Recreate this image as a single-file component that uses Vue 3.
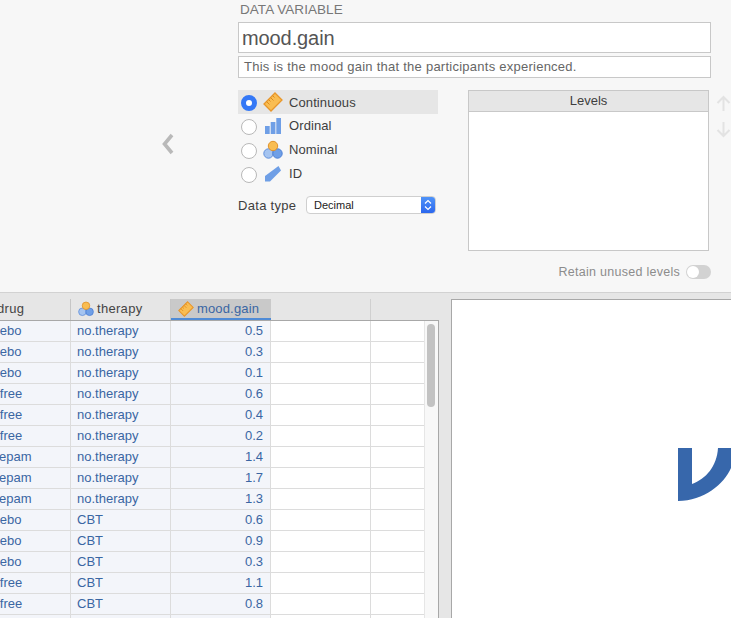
<script setup>
const drugs = ['placebo','placebo','placebo','anxifree','anxifree','anxifree','joyzepam','joyzepam','joyzepam','placebo','placebo','placebo','anxifree','anxifree','anxifree']
const gains = ['0.5','0.3','0.1','0.6','0.4','0.2','1.4','1.7','1.3','0.6','0.9','0.3','1.1','0.8','1.2']
const rows = drugs.map((drug, i) => ({ drug, therapy: i < 9 ? 'no.therapy' : 'CBT', gain: gains[i] }))
const measures = [
  { key: 'ruler', label: 'Continuous', on: true },
  { key: 'bars', label: 'Ordinal' },
  { key: 'circles', label: 'Nominal' },
  { key: 'tag', label: 'ID' }
]
</script>

<template>
  <div class="page">
    <section class="editor">
      <div class="back">
        <svg width="14" height="22" viewBox="0 0 14 22"><path d="M12 2 4.500 11l7.500 9" fill="none" stroke="#b9b9b9" stroke-width="3.600"/></svg>
      </div>
      <div class="form">
        <div class="title">DATA VARIABLE</div>
        <div class="name">mood.gain</div>
        <div class="desc">This is the mood gain that the participants experienced.</div>
        <div class="lower">
          <div class="measures">
            <div v-for="m in measures" :key="m.key" class="measure" :class="{ on: m.on }">
              <span class="radio"></span>
              <svg v-if="m.key === 'ruler'" class="micon" width="20" height="20" viewBox="0 0 20 20">
                <path d="M12 1 19 8 8 19 1 12Z" fill="#f9bd52" stroke="#e8962a" stroke-width="1.300"/>
                <path d="M3.500 9.500 6.500 12.500M5.500 7.500 7.500 9.500M7.500 5.500 10.500 8.500M9.500 3.500 11.500 5.500" stroke="#dd8a1e" stroke-width="1" fill="none"/>
              </svg>
              <svg v-else-if="m.key === 'bars'" class="micon" width="20" height="20" viewBox="0 0 20 20">
                <rect x="2" y="10" width="4.700" height="8" fill="#6f9fe6"/>
                <rect x="7.700" y="6" width="4.700" height="12" fill="#6f9fe6"/>
                <rect x="13.300" y="2" width="4.700" height="16" fill="#6f9fe6"/>
              </svg>
              <svg v-else-if="m.key === 'circles'" class="micon" width="20" height="20" viewBox="0 0 20 20">
                <circle cx="5.500" cy="13.500" r="4.700" fill="#a5c4f0" stroke="#5f8fdc" stroke-width="1"/>
                <circle cx="14.500" cy="13.500" r="4.700" fill="#6f9fe6" stroke="#4a7fd6" stroke-width="1"/>
                <circle cx="10" cy="6" r="4.700" fill="#f9bd52" stroke="#e0922a" stroke-width="1"/>
              </svg>
              <svg v-else class="micon" width="20" height="20" viewBox="0 0 20 20">
                <path d="M15.500 2 18 6.500 7 17.500H2V12Z" fill="#6f9fe6"/>
              </svg>
              <span class="mlabel">{{ m.label }}</span>
            </div>
            <div class="dtype">
              <span>Data type</span>
              <div class="select">
                <span class="sval">Decimal</span>
                <span class="stepper">
                  <svg width="8" height="12" viewBox="0 0 8 12"><path d="M1 4.500 4 1.500l3 3M1 7.500l3 3 3-3" fill="none" stroke="#fff" stroke-width="1.200"/></svg>
                </span>
              </div>
            </div>
          </div>
          <div class="levels-col">
            <div class="levels-row">
              <div class="levels">
                <div class="lhead">Levels</div>
              </div>
              <div class="arrows">
                <svg width="15" height="16" viewBox="0 0 15 16"><path d="M7.500 16V2M1.500 8l6-6 6 6" fill="none" stroke="#e3e3e3" stroke-width="2"/></svg>
                <svg width="15" height="16" viewBox="0 0 15 16"><path d="M7.500 0v14M1.500 8l6 6 6-6" fill="none" stroke="#e3e3e3" stroke-width="2"/></svg>
              </div>
            </div>
            <div class="retain">
              <span>Retain unused levels</span>
              <span class="toggle"><span class="knob"></span></span>
            </div>
          </div>
        </div>
      </div>
    </section>

    <section class="bottom">
      <div class="sheet">
        <div class="thead">
          <div class="th c1">
            <svg class="hicon" width="16" height="16" viewBox="0 0 20 20"><circle cx="5.500" cy="13.500" r="4.700" fill="#a5c4f0" stroke="#5f8fdc"/><circle cx="14.500" cy="13.500" r="4.700" fill="#6f9fe6" stroke="#4a7fd6"/><circle cx="10" cy="6" r="4.700" fill="#f9bd52" stroke="#e0922a"/></svg>
            <span>drug</span>
          </div>
          <div class="th c2">
            <svg class="hicon" width="16" height="16" viewBox="0 0 20 20"><circle cx="5.500" cy="13.500" r="4.700" fill="#a5c4f0" stroke="#5f8fdc"/><circle cx="14.500" cy="13.500" r="4.700" fill="#6f9fe6" stroke="#4a7fd6"/><circle cx="10" cy="6" r="4.700" fill="#f9bd52" stroke="#e0922a"/></svg>
            <span>therapy</span>
          </div>
          <div class="th c3 sel">
            <svg class="hicon" width="16" height="16" viewBox="0 0 20 20"><path d="M12 1 19 8 8 19 1 12Z" fill="#f9bd52" stroke="#e8962a" stroke-width="1.300"/><path d="M3.500 9.500 6.500 12.500M5.500 7.500 7.500 9.500M7.500 5.500 10.500 8.500M9.500 3.500 11.500 5.500" stroke="#dd8a1e" fill="none"/></svg>
            <span>mood.gain</span>
          </div>
          <div class="th c4"></div>
        </div>
        <div class="tbody">
          <div class="rows">
            <div v-for="(r, i) in rows" :key="i" class="tr">
              <div class="td c1 filled">{{ r.drug }}</div>
              <div class="td c2 filled">{{ r.therapy }}</div>
              <div class="td c3 filled num">{{ r.gain }}</div>
              <div class="td c4"></div>
              <div class="td c5"></div>
            </div>
          </div>
          <div class="scroll"><div class="thumb"></div></div>
        </div>
      </div>
      <div class="output">
        <svg class="logo" width="53" height="53" viewBox="678 448 53 53"><path d="M678 448H692V484C706 479 717 466 718 448H731V468C724 484 704 501 678 501Z" fill="#3767ab"/></svg>
      </div>
    </section>
  </div>
</template>

<style>
html, body { margin: 0; padding: 0; background: #e6e6e6; }
</style>

<style scoped>
.page {
  width: 731px;
  height: 618px;
  overflow: hidden;
  font-family: "Liberation Sans", Arial, sans-serif;
  font-size: 13px;
  color: #3e3e3e;
  background: #e6e6e6;
}
.editor {
  display: flex;
  height: 292px;
  background: #f7f7f7;
  border-bottom: 1px solid #d2d2d2;
}
.back { width: 238px; flex: none; box-sizing: border-box; padding: 133px 0 0 160px; }
.back svg { display: block; }
.form { width: 493px; flex: none; }
.title { height: 22px; line-height: 19px; font-size: 13.500px; letter-spacing: 0.050px; color: #777; padding-left: 2px; }
.name {
  box-sizing: border-box; width: 473px; height: 31px; line-height: 31px; padding-left: 3px;
  font-size: 20px; letter-spacing: -0.100px; color: #555; background: #fff; border: 1px solid #c8c8c8;
}
.desc {
  box-sizing: border-box; width: 473px; height: 22px; line-height: 20px; margin-top: 3px; padding-left: 5px;
  font-size: 13px; letter-spacing: 0.250px; color: #666; background: #fff; border: 1px solid #c8c8c8;
}
.lower { display: flex; margin-top: 12px; }
.measures { width: 200px; flex: none; }
.measure { display: flex; align-items: center; height: 24px; padding-left: 3px; }
.measure.on { background: #e6e6e6; }
.radio {
  box-sizing: border-box; width: 16px; height: 16px; border-radius: 50%; background: #fff;
  border: 1.500px solid #b8b8b8; margin: 2px 6px 0 0; flex: none;
}
.measure.on .radio { border: 5px solid #3478f6; }
.micon { margin-right: 6px; flex: none; }
.mlabel { margin-top: -1px; letter-spacing: 0.100px; }
.measure.on .mlabel { margin-top: 0; }
.dtype { display: flex; align-items: center; height: 18px; margin-top: 10px; }
.dtype > span:first-child { width: 68px; letter-spacing: 0.300px; }
.select {
  display: flex; box-sizing: border-box; width: 130px; height: 18px; background: #fff;
  border: 1px solid #cfcfcf; border-radius: 4px; overflow: hidden; font-size: 11px; color: #222;
}
.sval { flex: 1; line-height: 16px; padding-left: 7px; }
.stepper {
  width: 14px; display: flex; align-items: center; justify-content: center;
  background: linear-gradient(#4f93f8, #2b67ee);
}
.levels-col { margin-left: 30px; width: 263px; flex: none; }
.levels-row { display: flex; }
.levels {
  box-sizing: border-box; width: 241px; height: 161px; flex: none; background: #fff; border: 1px solid #c8c8c8;
}
.lhead {
  height: 20px; line-height: 20px; text-align: center; font-size: 13px;
  background: #e6e6e6; border-bottom: 1px solid #c8c8c8;
}
.arrows {
  display: flex; flex-direction: column; gap: 11px; margin-left: 7px; padding-top: 5px; flex: none;
}
.retain {
  display: flex; align-items: center; justify-content: flex-end; gap: 6px; width: 243px;
  margin-top: 14px; height: 14px; font-size: 12.500px; letter-spacing: 0.270px; color: #8c8c8c;
}
.toggle {
  box-sizing: border-box; width: 25px; height: 14px; border-radius: 7px; background: #d2d2d2; padding: 1px;
  flex: none;
}
.knob { display: block; width: 12px; height: 12px; border-radius: 50%; background: #fff; }
.bottom { display: flex; padding-top: 6px; }
.sheet { width: 468px; margin-left: -29px; flex: none; }
.thead { display: flex; height: 21px; }
.th {
  box-sizing: border-box; display: flex; align-items: center; height: 21px; padding: 0 0 2px 7px;
  border-right: 1px solid #c6c6c6; color: #444; letter-spacing: 0.300px;
}
.c1, .c2, .c3, .c4 { width: 100px; flex: none; }
.th.c4 { border-right: 1px solid #d0d0d0; }
.hicon { margin-right: 3px; flex: none; }
.th.sel {
  background: #c9c9c9; color: #3a66a3; border-bottom: 2px solid #4f8bd6; border-right: 0; padding-bottom: 0;
  letter-spacing: 0.150px;
}
.tbody {
  display: flex; height: 320px; background: #fff;
  border-top: 1px solid #a8a8a8; border-right: 1px solid #a8a8a8;
}
.rows { width: 453px; flex: none; }
.tr { display: flex; height: 21px; }
.td {
  box-sizing: border-box; height: 21px; line-height: 20px; padding: 0 6px;
  border-right: 1px solid #dcdcdc; border-bottom: 1px solid #dcdcdc; color: #3a66a3;
}
.td.c1 { padding-left: 5px; }
.td.filled { background: #f3f5fa; }
.td.num { text-align: right; padding-right: 7px; }
.td.c5 { flex: 1; border-right: 0; }
.scroll { flex: 1; background: #f8f8f8; border-left: 1px solid #e6e6e6; padding: 3px 3px 0 2px; }
.thumb { height: 83px; border-radius: 4px; background: #c2c2c2; }
.output {
  box-sizing: border-box; margin-left: 12px; flex: 1; height: 320px; background: #fff;
  border: 1px solid #a8a8a8; border-right: 0; border-bottom: 0; padding: 148px 0 0 226px;
}
.logo { display: block; }
</style>
